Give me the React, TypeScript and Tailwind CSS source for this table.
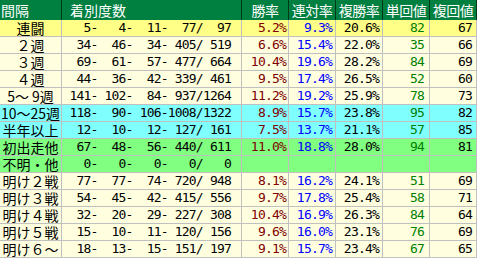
import React from 'react';

type Row = {
  label: string;
  counts: number[];
  win?: string;
  ren?: string;
  fuku?: string;
  tan?: string;
  fukuVal?: string;
  bg: string;
};

const rows: Row[] = [
  { label: '連闘', counts: [5, 4, 11, 77, 97], win: '5.2%', ren: '9.3%', fuku: '20.6%', tan: '82', fukuVal: '67', bg: 'bg-[#ffff88]' },
  { label: '２週', counts: [34, 46, 34, 405, 519], win: '6.6%', ren: '15.4%', fuku: '22.0%', tan: '35', fukuVal: '66', bg: 'bg-[#ffffe0]' },
  { label: '３週', counts: [69, 61, 57, 477, 664], win: '10.4%', ren: '19.6%', fuku: '28.2%', tan: '84', fukuVal: '69', bg: 'bg-[#ffffe0]' },
  { label: '４週', counts: [44, 36, 42, 339, 461], win: '9.5%', ren: '17.4%', fuku: '26.5%', tan: '52', fukuVal: '60', bg: 'bg-[#ffffe0]' },
  { label: '5～ 9週', counts: [141, 102, 84, 937, 1264], win: '11.2%', ren: '19.2%', fuku: '25.9%', tan: '78', fukuVal: '73', bg: 'bg-[#ffffe0]' },
  { label: '10～25週', counts: [118, 90, 106, 1008, 1322], win: '8.9%', ren: '15.7%', fuku: '23.8%', tan: '95', fukuVal: '82', bg: 'bg-[#80ffff]' },
  { label: '半年以上', counts: [12, 10, 12, 127, 161], win: '7.5%', ren: '13.7%', fuku: '21.1%', tan: '57', fukuVal: '85', bg: 'bg-[#80ffff]' },
  { label: '初出走他', counts: [67, 48, 56, 440, 611], win: '11.0%', ren: '18.8%', fuku: '28.0%', tan: '94', fukuVal: '81', bg: 'bg-[#80ff80]' },
  { label: '不明・他', counts: [0, 0, 0, 0, 0], bg: 'bg-[#80ff80]' },
  { label: '明け２戦', counts: [77, 77, 74, 720, 948], win: '8.1%', ren: '16.2%', fuku: '24.1%', tan: '51', fukuVal: '69', bg: 'bg-[#ffffe0]' },
  { label: '明け３戦', counts: [54, 45, 42, 415, 556], win: '9.7%', ren: '17.8%', fuku: '25.4%', tan: '58', fukuVal: '71', bg: 'bg-[#ffffe0]' },
  { label: '明け４戦', counts: [32, 20, 29, 227, 308], win: '10.4%', ren: '16.9%', fuku: '26.3%', tan: '84', fukuVal: '64', bg: 'bg-[#ffffe0]' },
  { label: '明け５戦', counts: [15, 10, 11, 120, 156], win: '9.6%', ren: '16.0%', fuku: '23.1%', tan: '76', fukuVal: '69', bg: 'bg-[#ffffe0]' },
  { label: '明け６～', counts: [18, 13, 15, 151, 197], win: '9.1%', ren: '15.7%', fuku: '23.4%', tan: '67', fukuVal: '65', bg: 'bg-[#ffffe0]' },
];

// same fixed-width layout as the source sheet: "%3d-%4d-%4d-%4d/%4d"
const formatCounts = (c: number[]) =>
  `${String(c[0]).padStart(3)}-${String(c[1]).padStart(4)}-${String(c[2]).padStart(4)}-${String(c[3]).padStart(4)}/${String(c[4]).padStart(4)}`;

const cols = 'grid grid-cols-[61px_179px_46px_46px_46px_46px_46px] gap-x-px pr-px';
const jp = "font-['Noto_Sans_CJK_JP','Noto_Sans',sans-serif]";
const mono = "font-['DejaVu_Sans_Mono',monospace] text-[13px] tracking-[-0.8px] whitespace-pre";

const headers = ['勝率', '連対率', '複勝率', '単回値', '複回値'];

export default function App() {
  return (
    <div className="w-[477px] h-[258px] bg-white overflow-hidden">
      {/* Header */}
      <div className={`${cols} h-[20px] bg-[#003818] text-white text-[14px] leading-[20px] ${jp}`}>
        <div className="bg-[#008040] pl-[1px]">間隔</div>
        <div className="bg-[#008040] pl-[8px]">着別度数</div>
        {headers.map((h) => (
          <div key={h} className="bg-[#008040] text-center tracking-[-0.5px]">
            {h}
          </div>
        ))}
      </div>

      {rows.map((row) => (
        <div key={row.label} className={`${cols} h-[17px] bg-[#c0c0c0] border-b border-[#c0c0c0] leading-[16px]`}>
          <div className={`${row.bg} ${jp} text-[14px] text-black text-center whitespace-pre`}>{row.label}</div>
          <div className={`${row.bg} ${mono} text-black text-right pr-[10px]`}>{formatCounts(row.counts)}</div>
          <div className={`${row.bg} ${mono} text-[#800000] text-right pr-[2px]`}>{row.win}</div>
          <div className={`${row.bg} ${mono} text-[#0000ff] text-right pr-[3px]`}>{row.ren}</div>
          <div className={`${row.bg} ${mono} text-black text-right pr-[3px]`}>{row.fuku}</div>
          <div className={`${row.bg} ${mono} text-[#008000] text-right pr-[5px]`}>{row.tan}</div>
          <div className={`${row.bg} ${mono} text-black text-right pr-[4px]`}>{row.fukuVal}</div>
        </div>
      ))}
    </div>
  );
}
